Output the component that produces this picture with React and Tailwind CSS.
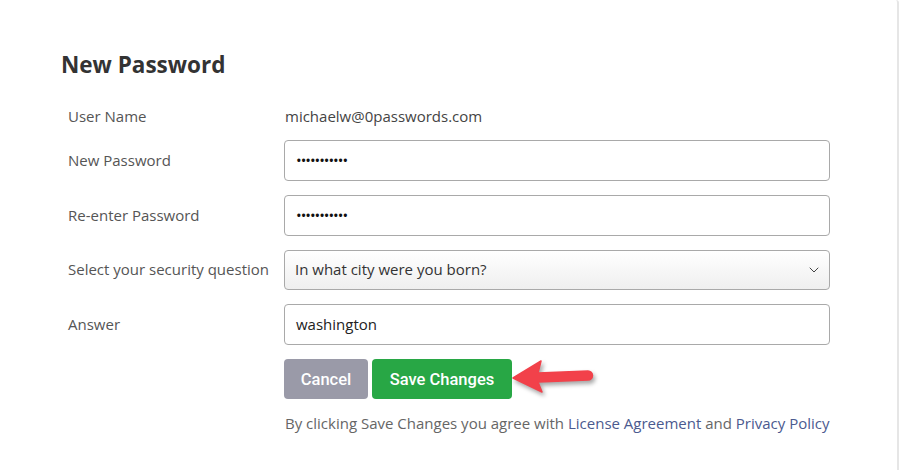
import { ChevronDown } from "lucide-react";

const labelCls = "w-[216px] shrink-0 text-[15px] text-[#555]";
const inputCls =
  "w-[546px] h-[41px] rounded-[4px] border border-[#a9a9a9] bg-white px-[11px] text-[15px] text-[#222] flex items-center";

const Row = ({ label, children }) => (
  <div className="flex items-center">
    <p className={labelCls}>{label}</p>
    {children}
  </div>
);

const App = () => {
  return (
    <div
      className="relative w-[899px] h-[470px] bg-white overflow-hidden"
      style={{ fontFamily: '"Open Sans", sans-serif' }}
    >
      <div className="absolute right-0 top-0 h-full w-[3px] rounded-tr-[6px] border-r-2 border-[#e6e6e6]" />

      <div className="pl-[61px] pt-[48px]">
        <h1 className="text-[22.5px] font-bold text-[#333] leading-[34px]">New Password</h1>

        <div className="ml-[7px] mt-[23px] flex flex-col">
          <Row label="User Name">
            <p className="text-[15px] text-[#444] ml-[1px]">michaelw@0passwords.com</p>
          </Row>

          <div className="mt-[12px] flex flex-col gap-[14px]">
            <Row label="New Password">
              <div className={inputCls}>
                <span className="text-[15px] tracking-[-1px] text-[#111]">•••••••••••</span>
              </div>
            </Row>
            <Row label="Re-enter Password">
              <div className={inputCls}>
                <span className="text-[15px] tracking-[-1px] text-[#111]">•••••••••••</span>
              </div>
            </Row>
            <Row label="Select your security question">
              <div
                className="w-[546px] h-[40px] rounded-[4px] border border-[#a9a9a9] bg-gradient-to-b from-white to-[#efefef] pl-[10px] pr-[7px] flex items-center justify-between text-[15px] text-[#333]"
              >
                <span>In what city were you born?</span>
                <ChevronDown size={16} strokeWidth={1.5} className="text-[#444]" />
              </div>
            </Row>
            <Row label="Answer">
              <div className={inputCls}>
                <span>washington</span>
              </div>
            </Row>
          </div>

          <div className="ml-[216px] mt-[14px] flex gap-[4px]" style={{ fontFamily: "Roboto, sans-serif" }}>
            <button className="w-[84px] h-[40px] pt-[3px] rounded-[4px] bg-[#9a9aa8] text-white text-[16.5px] font-medium">
              Cancel
            </button>
            <button className="w-[140px] h-[40px] pt-[3px] rounded-[4px] bg-[#28a745] text-white text-[16.5px] font-medium">
              Save Changes
            </button>
          </div>

          <p className="ml-[217px] mt-[13px] text-[15px] text-[#666]">
            By clicking Save Changes you agree with{" "}
            <span className="text-[#4b5a8f]">License Agreement</span> and{" "}
            <span className="text-[#4b5a8f]">Privacy Policy</span>
          </p>
        </div>
      </div>

      <svg
        className="absolute left-[508px] top-[357px]"
        width="90"
        height="44"
        viewBox="0 0 90 44"
        style={{ filter: "drop-shadow(2px 3px 2px rgba(0,0,0,0.35))" }}
      >
        <path
          d="M5 21 L33 4 L30 16 L80 14 A4.5 4.5 0 0 1 80 23 L30 25 L34 35 Z"
          fill="#f2414a"
          stroke="#f2414a"
          strokeWidth="1.5"
          strokeLinejoin="round"
        />
      </svg>
    </div>
  );
};

export default App;
